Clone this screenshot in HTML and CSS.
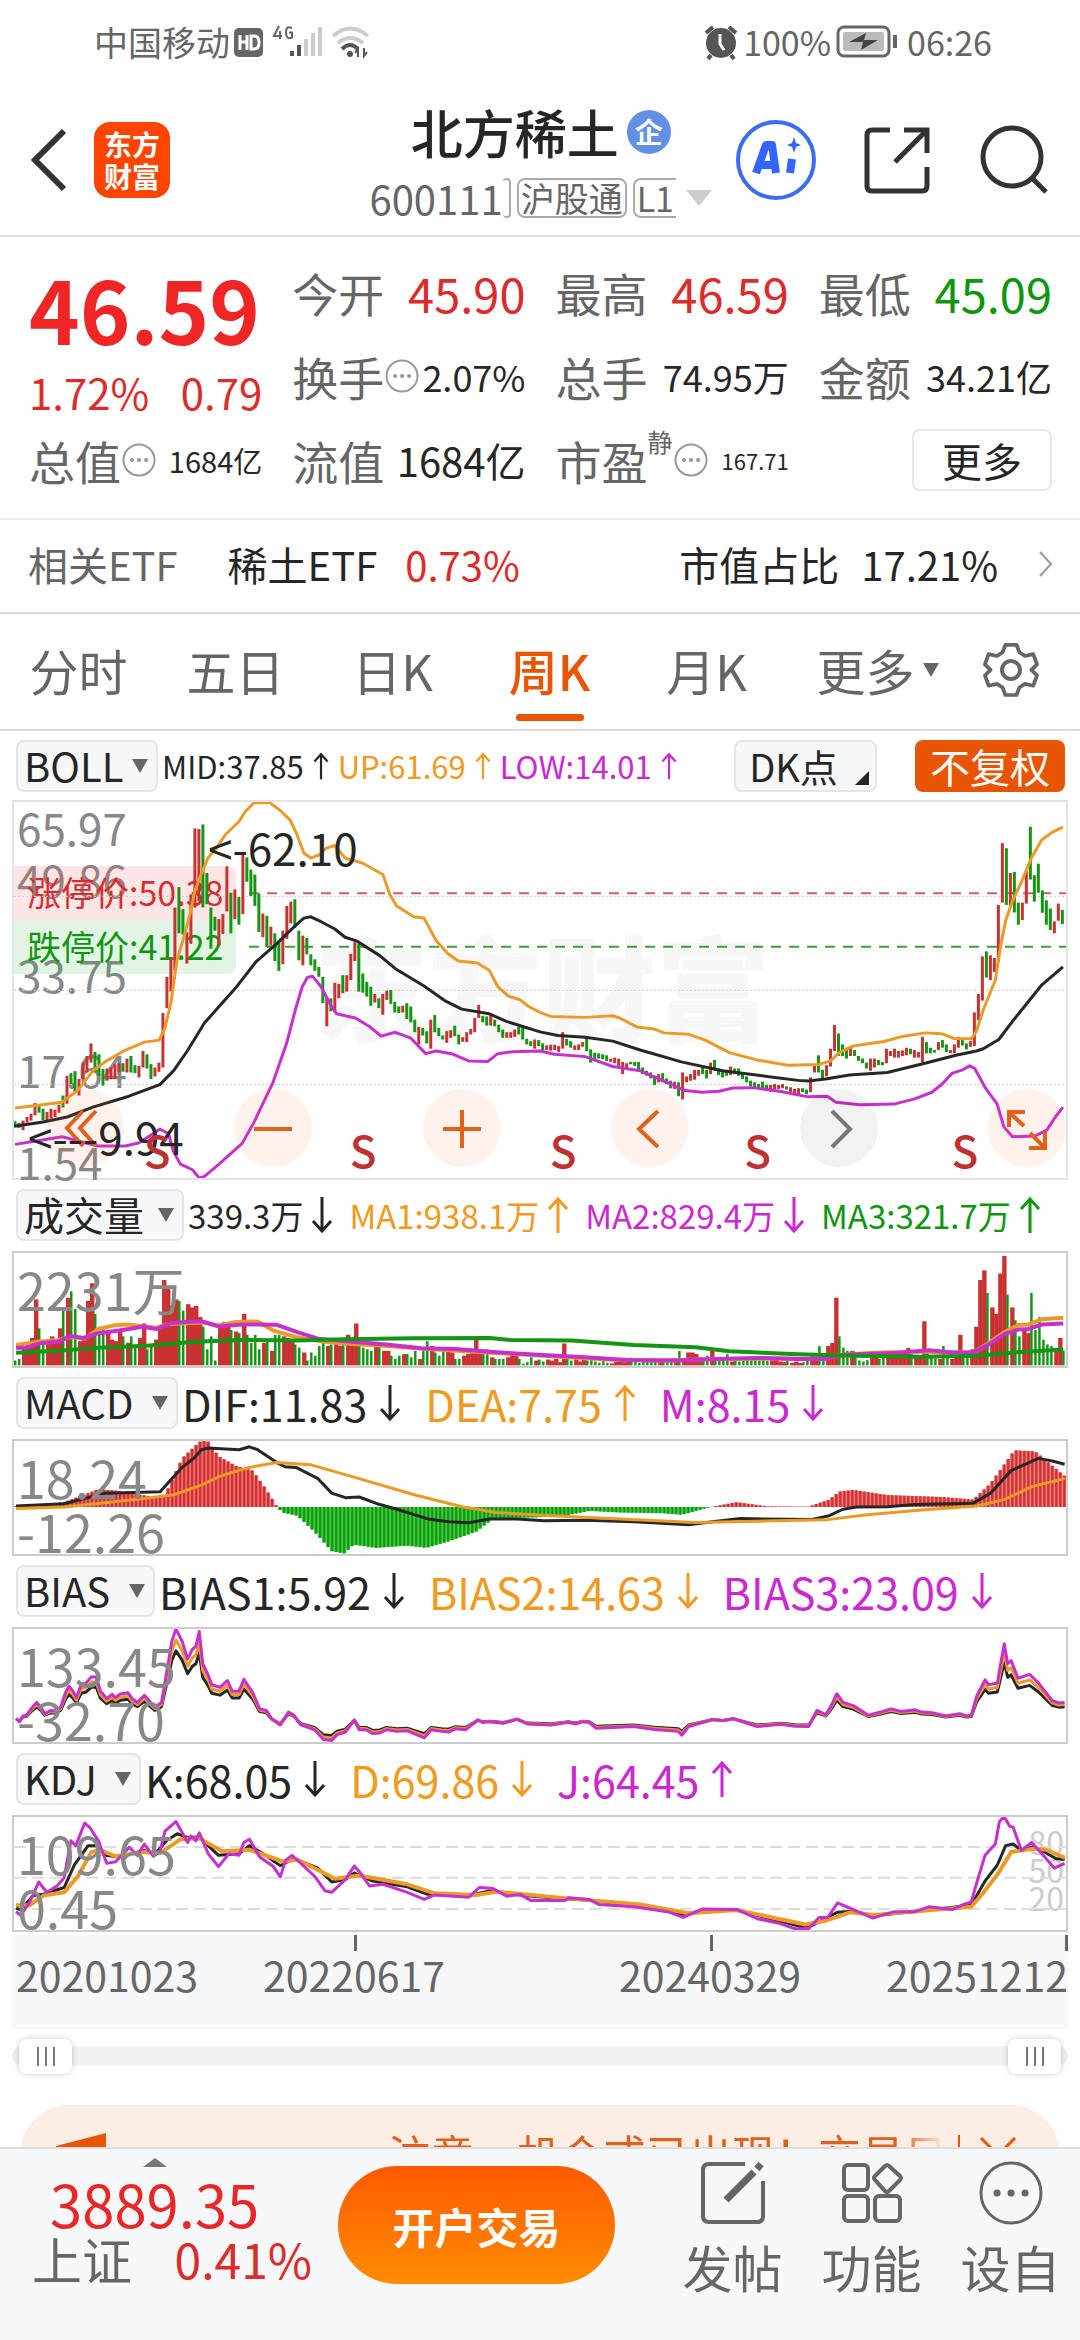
FILE: index.html
```html
<!DOCTYPE html>
<html lang="zh-CN">
<head>
  <meta charset="UTF-8">
  <meta name="viewport" content="width=device-width, initial-scale=1.0">
  <title>北方稀土 600111</title>
  <link rel="stylesheet" href="styles.css">
</head>
<body>
  <svg class="defs" aria-hidden="true">
    <symbol id="up" viewBox="0 0 22 38"><path d="M11 37V3M2 13l9-10 9 10"/></symbol>
    <symbol id="down" viewBox="0 0 22 38"><path d="M11 1v34M2 25l9 10 9-10"/></symbol>
    <symbol id="info" viewBox="0 0 34 34"><circle cx="17" cy="17" r="15.5"/><path d="M10 17h.1M17 17h.1M24 17h.1" stroke-width="4" stroke-linecap="round"/></symbol>
  </svg>

  <div class="status">
    <span>中国移动</span>
    <svg class="signal" width="142" height="40" viewBox="0 0 142 40">
      <rect x="2" y="6" width="29" height="29" rx="5" fill="#666"/>
      <path d="M8 13v15M15 13v15M8 20h7M19 14v13h3q5 0 5-6.500t-5-6.500z" fill="none" stroke="#fff" stroke-width="3"/>
      <path d="M47 4l-5 10h8M48 9v8M60 6q-6-3-6 4.500t6 5v-5h-3" fill="none" stroke="#666" stroke-width="2"/>
      <path d="M60 29v5M67 23v11" stroke="#555" stroke-width="4"/>
      <path d="M74 17v17M81 11v23M88 5v29" stroke="#ccc" stroke-width="4"/>
      <path d="M101 14q17-15 35 0M106 21q12-10 25 0" fill="none" stroke="#ccc" stroke-width="4"/>
      <path d="M110 27q8-8 16 0" fill="none" stroke="#555" stroke-width="4"/>
      <circle cx="118" cy="32" r="3" fill="#555"/>
      <path d="M126 35v-8l-3 4M132 26v8l3-4" fill="none" stroke="#555" stroke-width="2"/>
    </svg>
    <svg class="alarm" width="36" height="40" viewBox="0 0 36 40">
      <circle cx="18" cy="21" r="15" fill="#555"/>
      <path d="M3 11l7-6M26 5l7 6M8 33l-3 4M28 33l3 4" stroke="#555" stroke-width="4"/>
      <path d="M17 12v10l4 6" fill="none" stroke="#fff" stroke-width="3"/>
    </svg>
    <span>100%</span>
    <svg class="battery" width="64" height="40" viewBox="0 0 64 40">
      <rect x="3" y="5" width="51" height="29" rx="6" fill="none" stroke="#666" stroke-width="3"/>
      <rect x="8" y="10" width="41" height="19" rx="2" fill="#bbb"/>
      <path d="M14 20l17-9-2 7h14l-17 10 2-8z" fill="#444"/>
      <path d="M60 13v13" stroke="#666" stroke-width="4"/>
    </svg>
    <span>06:26</span>
  </div>

  <header class="header">
    <button class="plain" aria-label="返回"><svg width="38" height="64" viewBox="0 0 38 64"><path d="M34 3L5 32l29 29" fill="none" stroke="#333" stroke-width="6"/></svg></button>
    <a class="logo" href="#"><span>东方</span><span>财富</span></a>
    <div class="title">
      <h1>北方稀土<span class="badge">企</span></h1>
      <div class="code">
        <span>600111</span><span class="tag tag-left"></span><span class="tag">沪股通</span><span class="tag tag-cut">L1</span><i class="tri tri-light"></i>
      </div>
    </div>
    <button class="plain ai" aria-label="AI">
      <svg width="80" height="80" viewBox="0 0 80 80">
        <circle cx="40" cy="40" r="38" fill="#fff" stroke="#3d6cf2" stroke-width="4"/>
        <path d="M20 53L30 25h6l4 28M25 45h13M56 39l-2 14" fill="none" stroke="#3366ff" stroke-width="8" stroke-linejoin="round"/>
        <path d="M58 17l2 6 5 2-5 2-2 6-2-6-5-2 5-2z" fill="#3366ff"/>
      </svg>
    </button>
    <button class="plain" aria-label="分享">
      <svg width="66" height="68" viewBox="0 0 66 68" fill="none" stroke="#333" stroke-width="5">
        <path d="M26 4H8q-5 0-5 5v51q0 5 5 5h50q5 0 5-5V41M40 4h23v23M62 5L31 36"/>
      </svg>
    </button>
    <button class="plain" aria-label="搜索">
      <svg width="68" height="70" viewBox="0 0 68 70" fill="none" stroke="#333" stroke-width="5"><circle cx="32" cy="32" r="29"/><path d="M52 53l14 14"/></svg>
    </button>
  </header>

  <main class="content">
    <section class="quote">
      <div class="price">
        <strong>46.59</strong>
        <p><span>1.72%</span><span>0.79</span></p>
      </div>
      <dl class="item"><dt>今开</dt><dd class="large red">45.90</dd></dl>
      <dl class="item"><dt>最高</dt><dd class="large red">46.59</dd></dl>
      <dl class="item"><dt>最低</dt><dd class="large green">45.09</dd></dl>
      <dl class="item"><dt>换手<svg class="info"><use href="#info"/></svg></dt><dd>2.07%</dd></dl>
      <dl class="item"><dt>总手</dt><dd>74.95万</dd></dl>
      <dl class="item"><dt>金额</dt><dd>34.21亿</dd></dl>
      <dl class="item"><dt>总值<svg class="info"><use href="#info"/></svg></dt><dd class="small">1684亿</dd></dl>
      <dl class="item"><dt>流值</dt><dd class="medium">1684亿</dd></dl>
      <dl class="item"><dt>市盈<sup>静</sup><svg class="info"><use href="#info"/></svg></dt><dd class="tiny">167.71</dd></dl>
      <button class="more">更多</button>
    </section>

    <a class="etf" href="#">
      <span class="muted">相关ETF</span>
      <span class="etf-name">稀土ETF</span>
      <span class="red">0.73%</span>
      <span class="etf-share">市值占比</span>
      <span>17.21%</span>
      <svg width="16" height="28" viewBox="0 0 16 28"><path d="M2 2l11 12L2 26" fill="none" stroke="#999" stroke-width="2"/></svg>
    </a>

    <nav class="tabs">
      <button>分时</button>
      <button>五日</button>
      <button>日K</button>
      <button class="active">周K</button>
      <button>月K</button>
      <button class="tab-more">更多<i class="tri"></i></button>
      <button aria-label="设置">
        <svg width="58" height="60" viewBox="0 0 58 60" fill="none" stroke="#666" stroke-width="4" stroke-linejoin="round">
          <path d="M23 3h12l3 8 6 4 9-2 4 11-6 6 6 6-4 11-9-2-6 4-3 8H23l-3-8-6-4-9 2-4-11 6-6-6-6 4-11 9 2 6-4z" transform="translate(2 2) scale(.93)"/><circle cx="29" cy="30" r="9"/>
        </svg>
      </button>
    </nav>

    <section class="charts">
      <div class="legend legend-main">
        <label class="pick"><select aria-label="主图指标"><option>BOLL</option></select></label>
        <span>MID:37.85<svg class="arrow"><use href="#up"/></svg></span>
        <span class="orange">UP:61.69<svg class="arrow"><use href="#up"/></svg></span>
        <span class="purple">LOW:14.01<svg class="arrow"><use href="#up"/></svg></span>
        <button class="dk">DK点</button>
        <button class="adjust">不复权</button>
      </div>
      <div class="chart chart-main">
        <div class="watermark">东方财富</div>
        <div class="scale">
          <span>65.97</span><span>49.86</span><span>33.75</span><span>17.64</span><span>1.54</span>
        </div>
        <div class="limits"><p class="limit-up">涨停价:50.38</p><p class="limit-down">跌停价:41.22</p></div>
        <svg id="kline" class="plot" viewBox="35 30 3066 1140" preserveAspectRatio="none"></svg>
        <span class="note note-high">&lt;-62.10</span>
        <div class="tools">
          <button aria-label="最左"><svg viewBox="0 0 78 78"><path d="M37 22L21 39l16 18M50 22L34 39l16 18"/></svg></button>
          <button aria-label="缩小"><svg viewBox="0 0 78 78"><path d="M20 40h38"/></svg></button>
          <button aria-label="放大"><svg viewBox="0 0 78 78"><path d="M20 40h38M39 21v38"/></svg></button>
          <button aria-label="左移"><svg viewBox="0 0 78 78"><path d="M47 22L28 40l19 18"/></svg></button>
          <button class="off" aria-label="右移"><svg viewBox="0 0 78 78"><path d="M32 22l18 18-18 18"/></svg></button>
          <button aria-label="全屏"><svg viewBox="0 0 78 78"><path d="M21 38V23h16M22 24l14 13M41 59h16V43M56 58L42 44"/></svg></button>
        </div>
        <span class="note note-low">&lt;---9.94</span>
        <b class="sell" style="left:13.6%">S</b>
        <b class="sell" style="left:33.2%">S</b>
        <b class="sell" style="left:52.2%">S</b>
        <b class="sell" style="left:70.7%">S</b>
        <b class="sell" style="left:90.4%">S</b>
      </div>

      <div class="legend legend-volume">
        <label class="pick"><select aria-label="副图指标一"><option>成交量</option></select></label>
        <span>339.3万<svg class="arrow"><use href="#down"/></svg></span>
        <span class="orange">MA1:938.1万<svg class="arrow"><use href="#up"/></svg></span>
        <span class="purple">MA2:829.4万<svg class="arrow"><use href="#down"/></svg></span>
        <span class="green">MA3:321.7万<svg class="arrow"><use href="#up"/></svg></span>
      </div>
      <div class="chart">
        <svg id="volume" class="plot" viewBox="17 214 1533 351" preserveAspectRatio="none"></svg>
        <div class="range"><span>2231万</span></div>
      </div>

      <div class="legend">
        <label class="pick"><select aria-label="副图指标二"><option>MACD</option></select></label>
        <span>DIF:11.83<svg class="arrow"><use href="#down"/></svg></span>
        <span class="orange">DEA:7.75<svg class="arrow"><use href="#up"/></svg></span>
        <span class="purple">M:8.15<svg class="arrow"><use href="#down"/></svg></span>
      </div>
      <div class="chart">
        <svg id="macd" class="plot" viewBox="17 208 1533 351" preserveAspectRatio="none"></svg>
        <div class="range"><span>18.24</span><span>-12.26</span></div>
      </div>

      <div class="legend">
        <label class="pick"><select aria-label="副图指标三"><option>BIAS</option></select></label>
        <span>BIAS1:5.92<svg class="arrow"><use href="#down"/></svg></span>
        <span class="orange">BIAS2:14.63<svg class="arrow"><use href="#down"/></svg></span>
        <span class="purple">BIAS3:23.09<svg class="arrow"><use href="#down"/></svg></span>
      </div>
      <div class="chart">
        <svg id="bias" class="plot" viewBox="17 202 1533 351" preserveAspectRatio="none"></svg>
        <div class="range"><span>133.45</span><span>-32.70</span></div>
      </div>

      <div class="legend">
        <label class="pick"><select aria-label="副图指标四"><option>KDJ</option></select></label>
        <span>K:68.05<svg class="arrow"><use href="#down"/></svg></span>
        <span class="orange">D:69.86<svg class="arrow"><use href="#down"/></svg></span>
        <span class="purple">J:64.45<svg class="arrow"><use href="#up"/></svg></span>
      </div>
      <div class="chart">
        <div class="levels"><span>80</span><span>50</span><span>20</span></div>
        <svg id="kdj" class="plot" viewBox="17 196 1533 351" preserveAspectRatio="none"></svg>
        <div class="range"><span>109.65</span><span>0.45</span></div>
      </div>

      <div class="axis"><span>20201023</span><span>20220617</span><span>20240329</span><span>20251212</span></div>
      <div class="slider">
        <input type="range" aria-label="开始日期" min="0" max="100" value="0">
        <input type="range" aria-label="结束日期" min="0" max="100" value="100">
      </div>
    </section>

    <div class="notice">
      <svg width="56" height="50" viewBox="0 0 56 50" fill="#e85505"><path d="M4 16L54 3v44L4 34z"/></svg>
      <p>注意，机会或已出现！交易日内</p>
      <button class="plain" aria-label="关闭"><svg width="40" height="40" viewBox="0 0 40 40"><path d="M3 3l34 34M37 3L3 37" stroke="#e85505" stroke-width="3"/></svg></button>
    </div>
  </main>

  <footer class="bottom">
    <a class="index" href="#">
      <i class="tri-up"></i>
      <strong>3889.35</strong>
      <span class="index-row"><span>上证</span><span class="red">0.41%</span></span>
    </a>
    <button class="trade">开户交易</button>
    <button class="action">
      <svg width="64" height="64" viewBox="0 0 64 64" fill="none" stroke="#666" stroke-width="4"><path d="M44 3H8q-6 0-6 6v46q0 6 6 6h48q6 0 6-6V20"/><path d="M25 39L53 11" stroke-width="7"/><path d="M56 8l4-5" stroke-width="7"/></svg>
      <span>发帖</span>
    </button>
    <button class="action">
      <svg width="64" height="64" viewBox="0 0 64 64" fill="none" stroke="#666" stroke-width="4"><rect x="4" y="4" width="24" height="25" rx="4"/><rect x="4" y="35" width="24" height="25" rx="4"/><rect x="35" y="35" width="25" height="25" rx="4"/><path d="M45 5q2-2 4 0l11 10q2 2 0 4L49 30q-2 2-4 0L35 19q-2-2 0-4z"/></svg>
      <span>功能</span>
    </button>
    <button class="action">
      <svg width="64" height="64" viewBox="0 0 64 64" fill="none" stroke="#666" stroke-width="3"><circle cx="32" cy="32" r="30"/><path d="M18 32h.1M32 32h.1M46 32h.1" stroke-width="7" stroke-linecap="round"/></svg>
      <span>设自</span>
    </button>
  </footer>
  <script src="charts.js"></script>
</body>
</html>
```
FILE: styles.css
```css
* {
  box-sizing: border-box;
}
body {
  margin: 0;
  height: 100vh;
  display: flex;
  flex-direction: column;
  overflow: hidden;
  background: #fff;
  color: #262626;
  font-family: "Noto Sans CJK SC", sans-serif;
  font-size: 40px;
}
h1, p, dl, dd {
  margin: 0;
}
a {
  color: inherit;
  text-decoration: none;
}
button, select {
  font: inherit;
  color: inherit;
  border: none;
  background: none;
  padding: 0;
  cursor: pointer;
}
svg {
  display: block;
  flex: none;
}
.defs {
  position: absolute;
  width: 0;
  height: 0;
}
.red { color: #dc2b2b; }
.green { color: #0f960f; }
.orange { color: #f09a20; }
.purple { color: #cc28d2; }
.muted { color: #666; }

/* Status bar */
.status {
  flex: none;
  height: 85px;
  padding: 0 88px 2px 94px;
  display: flex;
  align-items: center;
  font-size: 34px;
  color: #666;
}
.signal {
  margin-left: 2px;
}
.alarm {
  margin-left: auto;
  margin-right: 4px;
}
.battery {
  margin: 0 8px 0 4px;
}

/* Header */
.header {
  flex: none;
  height: 152px;
  padding: 0 32px 0 30px;
  display: flex;
  align-items: center;
  border-bottom: 2px solid #ddd;
}
.logo {
  width: 76px;
  height: 76px;
  margin-left: 26px;
  border-radius: 16px;
  background: #ff4400;
  color: #fff;
  display: flex;
  flex-direction: column;
  align-items: center;
  justify-content: center;
  font-size: 28px;
  font-weight: 700;
  line-height: 32px;
}
.title {
  margin-left: auto;
  margin-right: 24px;
  padding-top: 4px;
}
.title h1 {
  display: flex;
  align-items: center;
  justify-content: center;
  font-size: 52px;
  font-weight: 500;
  line-height: 72px;
}
.badge {
  width: 44px;
  height: 44px;
  margin-left: 8px;
  border-radius: 50%;
  background: #6290e6;
  color: #fff;
  font-size: 28px;
  font-weight: 700;
  line-height: 42px;
  text-align: center;
}
.code {
  display: flex;
  align-items: center;
  height: 60px;
  color: #666;
  font-size: 40px;
}
.tag {
  height: 40px;
  margin-left: 6px;
  padding: 0 2px;
  border: 2px solid #aaa;
  border-radius: 8px;
  font-size: 34px;
  line-height: 36px;
}
.tag-left {
  width: 8px;
  margin-left: 0;
  border-left: none;
}
.tag-cut {
  border-right: none;
  border-radius: 8px 0 0 8px;
}
.tri {
  display: inline-block;
  border: 8px solid transparent;
  border-top: 14px solid #666;
  border-bottom: none;
}
.tri-light {
  margin-left: 10px;
  border-width: 16px 13px 0;
  border-top-color: #ccc;
}
.header .ai {
  margin-right: 48px;
}
.header .ai + .plain {
  margin-right: 50px;
}

.content {
  flex: 1;
  min-height: 0;
  overflow: hidden;
}
.quote {
  padding: 13px 28px 16px 29px;
  display: grid;
  grid-template-columns: repeat(4, minmax(0, 1fr));
  grid-auto-rows: 84px;
  column-gap: 30px;
  border-bottom: 2px solid #eee;
}
.price {
  grid-row: span 2;
  color: #f02525;
}
.price strong {
  display: block;
  font-size: 86px;
  line-height: 116px;
}
.price p {
  display: flex;
  justify-content: space-between;
  color: #dc2b2b;
  font-size: 42px;
  line-height: 52px;
}
.item {
  display: flex;
  align-items: center;
  justify-content: space-between;
  white-space: nowrap;
}
.item dt {
  display: flex;
  align-items: center;
  font-size: 46px;
  color: #666;
}
.item dd {
  font-size: 36px;
}
.item .large { font-size: 47px; }
.item .medium { font-size: 40px; }
.item .small { font-size: 29px; }
.item .tiny { font-size: 22px; }
.item sup {
  align-self: flex-start;
  font-size: 25px;
  line-height: 28px;
}
.info {
  width: 34px;
  height: 34px;
  margin-left: 1px;
  fill: none;
  stroke: #999;
  stroke-width: 2;
}
.quote .more {
  width: 140px;
  height: 62px;
  place-self: center end;
  border: 2px solid #e8e8e8;
  border-radius: 8px;
  line-height: 54px;
}
.etf {
  height: 94px;
  padding: 0 26px 4px 28px;
  display: flex;
  align-items: center;
  border-bottom: 2px solid #ddd;
}
.etf-name {
  margin: 0 28px 0 50px;
}
.etf-share {
  margin: 0 22px 0 auto;
}
.etf svg {
  margin-left: 40px;
}

/* Period tabs */
.tabs {
  height: 117px;
  display: grid;
  grid-template-columns: repeat(6, 1fr) 138px;
  border-bottom: 2px solid #ddd;
  color: #666;
  font-size: 49px;
}
.tabs button {
  padding-bottom: 4px;
  display: flex;
  align-items: center;
  justify-content: center;
  white-space: nowrap;
}
.tabs .tri {
  margin-left: 8px;
}
.tabs .tab-more {
  padding-left: 28px;
}
.tabs .active {
  position: relative;
  color: #e85505;
  font-weight: 500;
}
.active::after {
  content: "";
  position: absolute;
  left: 50%;
  bottom: 8px;
  width: 68px;
  height: 7px;
  margin-left: -34px;
  border-radius: 4px;
  background: #e85505;
}

/* Charts */
.charts {
  padding: 0 12px;
}
.legend {
  height: 71px;
  padding: 0 0 2px 4px;
  display: flex;
  align-items: center;
  gap: 4px;
  font-size: 43px;
  white-space: nowrap;
}
.legend > span {
  display: flex;
  align-items: center;
  margin-right: 20px;
}
.legend-main {
  height: 69px;
  padding-bottom: 0;
  font-size: 31px;
}
.legend-main > span {
  margin-right: 4px;
}
.legend-volume {
  font-size: 33px;
}
.legend-volume > span {
  margin-right: 12px;
}
.arrow {
  width: 22px;
  height: 38px;
  margin-left: 12px;
  fill: none;
  stroke: currentColor;
  stroke-width: 3;
}
.legend-main .arrow {
  width: 18px;
  height: 28px;
  margin-left: 8px;
}
.legend-volume .arrow {
  margin-left: 8px;
}
.pick {
  position: relative;
}
.pick select {
  display: block;
  appearance: none;
  height: 52px;
  padding: 0 42px 2px 6px;
  border: 2px solid #e3e5e9;
  border-radius: 8px;
  background: #f7f8fa;
  font-size: 40px;
  line-height: 46px;
}
.pick::after {
  content: "";
  position: absolute;
  right: 10px;
  top: 19px;
  border: 8px solid transparent;
  border-top: 14px solid #666;
  border-bottom: none;
}
.legend-main select {
  padding-right: 32px;
}
.legend-volume select {
  padding-right: 38px;
}
.legend .dk, .legend .adjust {
  height: 52px;
  border-radius: 8px;
  font-size: 38px;
  line-height: 44px;
}
.legend .dk {
  position: relative;
  width: 143px;
  margin-left: auto;
  padding-right: 24px;
  border: 2px solid #e3e5e9;
  background: #f7f8fa;
}
.dk::after {
  content: "";
  position: absolute;
  right: 6px;
  bottom: 5px;
  border-left: 14px solid transparent;
  border-bottom: 14px solid #262626;
}
.legend .adjust {
  width: 150px;
  margin: 0 3px 0 34px;
  background: #e85505;
  color: #fff;
  font-size: 40px;
}
.chart {
  position: relative;
  height: 117px;
  border: 2px solid #ccc;
}
.chart-main {
  height: 380px;
  border-color: #e3e3e3;
}
.plot {
  position: absolute;
  inset: 0;
  width: 100%;
  height: 100%;
}
.plot * {
  vector-effect: non-scaling-stroke;
}
.watermark {
  position: absolute;
  top: 92px;
  left: 300px;
  color: #f7f7f7;
  font-size: 114px;
  font-weight: 900;
  line-height: 180px;
}
.scale span {
  position: absolute;
  left: 3px;
  color: #888;
  font-size: 44px;
  line-height: 56px;
}
.scale span:nth-child(1) { top: -3px; }
.scale span:nth-child(2) { top: 49px; }
.scale span:nth-child(3) { top: 144px; }
.scale span:nth-child(4) { top: 239px; }
.scale span:nth-child(5) { bottom: -11px; }
.limits {
  position: absolute;
  top: 64px;
  left: 0;
  font-size: 34px;
}
.limits p {
  height: 54px;
  padding: 0 13px;
  line-height: 52px;
}
.limit-up {
  border-radius: 0 8px 0 0;
  background: rgba(255, 80, 80, .14);
  color: #dc2b2b;
}
.limit-down {
  border-radius: 0 0 8px 0;
  background: rgba(30, 180, 50, .13);
  color: #0f960f;
}
.note {
  position: absolute;
  font-size: 44px;
  line-height: 56px;
}
.note-high {
  top: 17px;
  left: 194px;
}
.note-low {
  top: 306px;
  left: 14px;
}
.tools {
  position: absolute;
  left: 32px;
  right: 0;
  bottom: 11px;
  display: flex;
  justify-content: space-between;
}
.tools button {
  width: 78px;
  height: 78px;
  border-radius: 50%;
  background: rgba(255, 100, 30, .09);
}
.tools svg {
  fill: none;
  stroke: #e0601c;
  stroke-width: 4;
}
.tools .off {
  background: rgba(0, 0, 0, .05);
}
.tools .off svg {
  stroke: #777;
}
.sell {
  position: absolute;
  top: 319px;
  width: 28px;
  margin-left: -14px;
  color: #c03030;
  font-size: 44px;
  font-weight: 500;
  line-height: 56px;
  text-align: center;
}
.range {
  position: absolute;
  top: 9px;
  left: 3px;
  color: #888;
  font-size: 52px;
  line-height: 54px;
}
.range span, .levels span {
  display: block;
}
.levels {
  position: absolute;
  top: 10px;
  right: 2px;
  color: #ccc;
  font-size: 32px;
  line-height: 28px;
}
.axis {
  height: 94px;
  margin-top: 3px;
  display: grid;
  grid-template-columns: minmax(0, 164fr) minmax(0, 356fr) minmax(0, 356fr) minmax(0, 180fr);
  background: #f7f8fa;
  color: #666;
  font-size: 41px;
  line-height: 78px;
}
.axis span {
  position: relative;
  text-align: center;
}
.axis span:first-child {
  padding-left: 4px;
  text-align: left;
}
.axis span:last-child {
  display: flex;
  justify-content: flex-end;
}
.axis span:not(:first-child)::before {
  content: "";
  position: absolute;
  top: 0;
  left: 50%;
  width: 3px;
  height: 16px;
  background: #666;
}
.axis span:last-child::before {
  left: auto;
  right: 0;
}
.slider {
  position: relative;
  height: 20px;
  margin: 17px 0 39px;
  border-radius: 10px;
  background: #f1f1f4;
}
.slider input {
  position: absolute;
  left: 7px;
  right: 7px;
  top: -8px;
  width: calc(100% - 14px);
  height: 36px;
  margin: 0;
  appearance: none;
  background: none;
  pointer-events: none;
}
.slider input::-webkit-slider-thumb {
  appearance: none;
  width: 53px;
  height: 35px;
  border-radius: 8px;
  background: linear-gradient(90deg, #777 2px, transparent 2px 8px, #777 8px 10px, transparent 10px 16px, #777 16px) center / 18px 19px no-repeat #fff;
  box-shadow: 0 0 6px rgba(0, 0, 0, .2);
  pointer-events: auto;
}

/* Notice */
.notice {
  height: 100px;
  margin: 0 20px;
  padding: 0 42px 0 32px;
  display: flex;
  align-items: center;
  border-radius: 50px;
  background: #fdeee5;
  color: #e0601c;
  font-size: 43px;
}
.notice p {
  width: 556px;
  margin-left: auto;
  margin-right: 14px;
  padding-bottom: 4px;
  overflow: hidden;
  white-space: nowrap;
  -webkit-mask-image: linear-gradient(90deg, #000 92%, transparent);
  mask-image: linear-gradient(90deg, #000 92%, transparent);
}
.notice .plain {
  padding-left: 18px;
  border-left: 2px solid #e85505;
}

/* Bottom bar */
.bottom {
  flex: none;
  height: 193px;
  padding-left: 32px;
  display: flex;
  align-items: flex-start;
  border-top: 2px solid #ddd;
  background: #f7f8fa;
  color: #666;
  font-size: 50px;
}
.index {
  width: 280px;
  padding-top: 9px;
  display: flex;
  flex-direction: column;
}
.index strong {
  padding-left: 18px;
  color: #e82828;
  font-size: 58px;
  font-weight: 400;
  line-height: 72px;
}
.tri-up {
  align-self: flex-start;
  margin-left: 111px;
  border: 12px solid transparent;
  border-top: none;
  border-bottom: 9px solid #777;
}
.index-row {
  display: flex;
  justify-content: space-between;
  line-height: 38px;
}
.index-row .red {
  font-size: 48px;
}
.trade {
  width: 277px;
  height: 118px;
  margin: 17px auto 0 26px;
  border-radius: 59px;
  background: linear-gradient(#ff5a00, #ff8c00);
  color: #fff;
  font-size: 42px;
  font-weight: 700;
}
.action {
  width: 139px;
  padding-top: 12px;
  display: flex;
  flex-direction: column;
  align-items: center;
}
.action span {
  line-height: 82px;
}
```
FILE: charts.js
```js
const RED = '#c83232';
const GREEN = '#149614';
const BLACK = '#262626';
const ORANGE = '#eb9a28';
const PURPLE = '#c830cd';

// Weekly candles: colour, high and low
const candles = `g998-1012 g1003-1018 r996-1025 r985-1002 r975-996 r943-980 g948-972 g960-995 r970-995 r960-990
r963-985 r948-972 g920-956 r860-945 g852-885 g846-912 r870-920 r820-870 r800-850 r762-820
g788-850 g795-860 g840-890 r838-875 r835-870 r825-870 r822-850 g822-848 r808-850 g800-850
g828-852 r830-865 r785-835 g795-838 g825-870 r835-862 r820-848 r670-835 r560-655 r500-605
r350-540 g288-428 g355-432 r425-520 r310-460 r110-350 r112-330 g98-350 g245-340 g350-475
g378-420 r385-465 r370-430 r225-362 g305-428 r295-385 g318-402 r190-370 g198-272 g235-315
g250-345 g308-424 r368-440 g375-470 r408-465 g428-512 g450-542 r420-522 r345-445 r332-398
g325-412 g420-510 r435-525 g442-492 g492-525 g507-542 g530-560 g560-640 r625-710 g625-665
r578-668 r582-625 g555-610 r555-605 r490-570 r455-512 g460-605 g550-608 g575-620 g590-648
r612-638 g625-655 r612-675 r602-630 g600-642 g636-668 g650-670 r648-668 g640-688 g650-698
g690-728 r712-765 g715-738 g725-762 r690-778 g676-728 g715-740 g738-750 r725-760 r722-745
g708-740 g735-765 r743-757 r728-758 r718-735 r685-728 r645-685 g678-698 g680-708 r672-708
g690-710 g705-728 g720-745 r728-745 r728-745 r720-742 g712-735 g712-750 g748-765 g755-770
r750-778 g752-770 g762-782 r768-782 r766-784 r766-782 r770-788 r728-778 g748-768 g755-775
r768-782 r765-782 r758-772 g745-785 g780-820 g790-812 g792-808 g795-810 g798-815 r808-818
r805-822 r808-830 r818-855 r822-838 g818-825 g818-830 g818-842 g835-855 g845-860 g850-868
g860-888 r855-880 g852-880 g868-885 g875-898 r878-900 g880-922 r850-932 r862-880 r855-875
r842-872 r842-860 g832-855 g842-868 r820-855 g812-845 g838-858 g845-865 g845-860 r832-858
g838-855 g838-860 g850-870 g862-880 g875-892 g880-898 g885-900 g878-900 g888-905 r888-908
r885-902 r888-900 r885-898 g892-902 r895-910 r900-915 r898-918 g898-910 g902-916 r865-910
r825-850 g798-850 g842-868 r828-862 r778-832 r706-785 g732-800 g765-800 g775-808 r772-800
g782-800 g800-815 g808-822 g820-838 r808-845 r808-835 g812-828 g818-828 r778-822 r785-800
r778-805 r785-805 r783-800 r775-798 g778-795 r782-805 r788-805 r742-820 g758-792 g775-792
g782-790 r758-782 g752-775 g765-788 r782-792 r765-792 r742-775 g745-768 g762-780 r755-772
r668-770 r612-692 r498-632 g483-562 r495-570 r503-545 r342-515 r155-335 g170-342 r245-345
g242-365 g335-402 r335-388 r240-338 g105-265 g252-332 g217-305 g298-366 g328-402 g353-418
r392-428 r338-390 g357-400`.split(/\s+/).map(c => {
  const [high, low] = c.slice(1).split('-').map(Number);
  return { color: c[0] === 'r' ? RED : GREEN, high, low };
});

const volumes = [15, 20, 60, 70, 85, 205, 115, 75, 80, 90, 80, 115, 170, 210, 230, 175, 75, 80, 200, 255,
  160, 120, 120, 100, 80, 75, 110, 90, 70, 90, 60, 85, 130, 50, 60, 80, 120, 265, 245, 185,
  205, 200, 170, 190, 180, 185, 150, 120, 50, 90, 15, 130, 135, 125, 110, 105, 100, 160, 95, 70,
  95, 50, 70, 80, 45, 95, 95, 90, 85, 80, 65, 55, 40, 15, 40, 30, 60, 85, 60, 65,
  80, 60, 65, 95, 60, 130, 70, 55, 50, 45, 60, 65, 45, 45, 30, 20, 30, 35, 35, 25,
  45, 20, 45, 75, 60, 40, 30, 50, 45, 40, 20, 20, 30, 35, 45, 80, 40, 45, 50, 25,
  20, 20, 20, 25, 40, 30, 20, 5, 10, 25, 15, 18, 12, 18, 14, 20, 10, 68, 20, 15,
  25, 12, 18, 15, 20, 12, 8, 15, 8, 6, 12, 18, 10, 20, 24, 12, 8, 12, 20, 10,
  14, 10, 18, 10, 16, 12, 45, 20, 40, 40, 35, 25, 20, 30, 50, 20, 20, 25, 35, 12,
  18, 12, 14, 20, 18, 22, 16, 24, 14, 20, 22, 12, 10, 16, 8, 12, 8, 10, 14, 28,
  22, 60, 30, 60, 70, 210, 90, 55, 45, 45, 25, 15, 12, 16, 40, 35, 20, 30, 36, 42,
  38, 45, 48, 54, 35, 30, 28, 137, 40, 25, 22, 20, 60, 25, 20, 30, 95, 40, 25, 50,
  120, 265, 295, 225, 180, 160, 285, 340, 220, 180, 140, 90, 110, 100, 225, 110, 150, 80, 65, 60,
  50, 85, 45];

const macdBars = '20,410 60,405 90,398 140,358 165,362 200,375 235,385 262,262 285,215 290,207 300,210 315,255 340,285 365,300 385,360 400,411 408,430 430,440 455,490 480,550 498,557 512,530 545,540 590,533 618,540 650,520 690,490 715,450 740,447 780,445 820,440 855,425 900,430 960,432 990,437 1030,414 1070,398 1115,411 1175,412 1205,390 1220,365 1240,360 1290,376 1370,382 1415,390 1440,340 1475,237 1505,240 1530,285 1550,320';

const bias = '20,480 25,490 30,472 35,470 42,450 50,430 56,445 62,465 70,455 78,457 85,445 92,400 97,380 103,395 108,415 115,375 122,370 130,350 137,352 143,395 152,418 160,405 165,415 172,404 183,400 190,420 197,430 207,408 222,445 232,430 240,330 247,240 253,202 262,240 270,295 277,265 282,255 287,210 292,310 300,345 305,375 317,383 328,362 335,395 345,395 352,358 365,400 375,450 385,455 392,480 405,500 417,460 425,470 435,500 455,515 468,545 480,548 488,530 500,522 513,485 520,515 530,515 540,527 550,525 560,515 575,520 590,518 600,527 615,540 625,515 640,520 650,522 660,512 675,515 693,485 700,492 710,490 730,495 750,482 765,497 800,500 825,492 835,497 845,490 855,492 865,510 890,508 920,505 950,514 985,520 990,532 1000,505 1035,483 1050,487 1065,480 1100,505 1135,498 1155,504 1175,505 1187,455 1200,468 1208,440 1216,403 1225,430 1240,440 1262,470 1280,460 1295,450 1310,458 1330,453 1340,460 1355,462 1375,472 1395,465 1405,472 1412,470 1420,410 1432,360 1437,375 1450,370 1460,248 1465,310 1470,300 1480,355 1497,343 1510,370 1530,425 1540,432 1548,430';

function add(id, tag, attrs) {
  const el = document.createElementNS('http://www.w3.org/2000/svg', tag);
  for (const key in attrs) el.setAttribute(key, attrs[key]);
  document.getElementById(id).appendChild(el);
}

function line(id, points, color, width) {
  add(id, 'polyline', { points, fill: 'none', stroke: color, 'stroke-width': width, 'stroke-linejoin': 'round' });
}

function rule(id, x1, x2, y, color, dash, width = 1) {
  add(id, 'path', { d: `M${x1} ${y}H${x2}`, stroke: color, 'stroke-width': width, 'stroke-dasharray': dash });
}

function toPoints(text) {
  return text.split(' ').map(p => p.split(',').map(Number));
}

function valueAt(points, x) {
  const i = Math.max(1, points.findIndex(p => p[0] >= x));
  const [x1, y1] = points[i - 1];
  const [x2, y2] = points[i];
  return y1 + (y2 - y1) * (x - x1) / (x2 - x1);
}

// K line with Bollinger bands
[316, 601, 886].forEach(y => rule('kline', 35, 3101, y, '#ccc', '2 2'));
rule('kline', 720, 3101, 307, '#c86464', '10 8', 2);
rule('kline', 720, 3101, 469, '#3c9b3c', '10 8', 2);
candles.forEach((c, i) => {
  add('kline', 'path', { d: `M${38 + i * 11.65} ${c.high}V${c.low}`, stroke: c.color, 'stroke-width': 3 });
});
line('kline', '38,958 100,950 175,940 220,905 265,845 300,818 360,782 415,758 458,752 475,715 492,640 510,510 530,440 548,370 562,300 580,250 600,200 625,170 650,130 690,90 710,58 735,32 780,32 810,55 840,85 860,130 880,185 900,200 925,190 945,170 970,162 1000,200 1050,215 1110,250 1130,310 1150,345 1200,378 1230,382 1265,450 1300,490 1330,512 1385,518 1420,540 1445,590 1475,618 1510,630 1535,650 1568,668 1600,680 1700,683 1780,678 1800,685 1850,712 1900,718 1930,730 2000,734 2050,752 2120,790 2200,812 2290,828 2380,826 2415,815 2440,790 2480,770 2570,756 2620,742 2690,730 2740,733 2775,747 2825,748 2840,725 2860,660 2895,570 2910,470 2925,390 2945,330 2970,275 3000,200 3030,145 3060,122 3092,106', ORANGE, 3);
line('kline', '35,1013 120,1000 190,985 265,955 370,922 460,887 500,845 540,785 590,700 680,595 740,515 800,460 860,400 880,382 900,378 930,393 970,415 1000,440 1035,452 1100,495 1150,538 1230,588 1290,632 1340,658 1420,672 1470,695 1568,727 1620,738 1700,743 1780,755 1860,782 1980,818 2100,845 2230,862 2320,874 2350,876 2400,870 2470,858 2580,850 2690,822 2780,798 2840,785 2860,778 2905,750 2945,695 2980,650 3030,585 3092,530', BLACK, 3);
line('kline', '38,1068 100,1058 175,1045 260,1068 280,1073 360,1073 400,1063 460,1022 485,1035 500,1090 520,1128 555,1145 575,1170 590,1165 630,1130 700,1065 735,1000 790,880 830,760 855,660 875,590 890,562 905,558 930,590 955,640 975,672 1030,685 1070,710 1105,740 1145,728 1190,745 1235,793 1265,785 1310,793 1360,815 1415,817 1445,793 1490,787 1568,785 1610,795 1700,802 1780,832 1860,845 1920,872 1990,905 2040,910 2090,907 2130,897 2190,896 2270,908 2350,924 2405,922 2430,940 2500,948 2600,946 2660,930 2710,910 2740,885 2770,852 2800,842 2820,830 2835,838 2865,895 2900,945 2920,1015 2945,1045 3010,1043 3045,1025 3070,985 3092,955', PURPLE, 3);

// Volume
volumes.forEach((v, i) => {
  const up = candles[i].color === RED;
  add('volume', 'rect', { x: 17 + i * 5.83, y: 563 - v, width: up ? 6.4 : 3.6, height: v, fill: candles[i].color });
});
line('volume', '20,500 50,490 80,485 100,475 120,480 140,450 165,438 185,436 205,442 225,446 240,435 265,432 295,430 315,440 340,428 372,427 395,455 430,476 470,490 510,497 560,503 620,512 680,520 740,527 800,535 880,545 960,548 1040,543 1120,542 1180,543 1225,530 1270,524 1340,520 1370,523 1415,523 1440,490 1460,460 1480,438 1495,436 1515,420 1546,415', ORANGE, 4);
line('volume', '20,508 35,508 55,494 80,490 100,472 118,478 140,463 170,455 205,443 225,450 245,432 265,428 290,426 315,442 350,436 400,437 430,460 460,480 510,490 560,498 610,510 660,512 720,522 780,530 850,538 910,546 980,548 1040,543 1100,540 1160,543 1200,543 1225,530 1300,525 1350,516 1385,523 1415,523 1440,495 1460,466 1480,452 1495,450 1515,436 1546,433', PURPLE, 4);
line('volume', '20,524 80,518 140,508 210,502 280,490 350,484 430,486 500,482 600,479 710,478 740,484 830,486 920,500 1010,507 1060,519 1150,528 1220,532 1340,536 1420,533 1480,522 1546,514', GREEN, 4);

// MACD
const bars = toPoints(macdBars);
for (let i = 0; i < candles.length; i++) {
  const x = 20 + i * 5.83;
  const y = valueAt(bars, x);
  const up = y < 413;
  add('macd', 'rect', { x: x - 3, y: Math.min(y, 413), width: 6, height: Math.abs(413 - y), fill: up ? '#f06464' : '#37c837' });
  add('macd', 'path', { d: `M${x} 413V${y}`, stroke: up ? RED : GREEN, 'stroke-width': 2 });
}
line('macd', '20,410 90,403 150,370 230,366 245,330 262,290 280,260 290,235 300,230 345,235 360,226 372,235 400,275 412,288 428,290 460,325 480,370 500,384 520,382 545,402 575,420 620,450 650,459 680,462 710,450 750,450 790,456 850,454 920,459 1000,468 1035,459 1075,449 1180,452 1205,440 1225,420 1245,413 1290,412 1330,405 1415,401 1440,370 1470,300 1510,262 1530,270 1548,280', BLACK, 3);
line('macd', '20,418 90,413 150,400 200,388 250,375 290,345 320,315 360,290 400,275 450,282 520,325 600,375 670,412 720,430 800,440 900,450 1010,461 1100,457 1200,453 1260,437 1340,422 1420,410 1460,390 1500,350 1548,325', ORANGE, 3);

// BIAS: the shorter periods swing less
[[.76, BLACK], [.88, ORANGE], [1, PURPLE]].forEach(([k, color]) => {
  line('bias', toPoints(bias).map(([x, y]) => `${x},${485 + (y - 485) * k}`).join(' '), color, 3);
});

// KDJ
[289, 385, 482].forEach(y => rule('kdj', 17, 1550, y, '#ddd', '12 6', 2));
line('kdj', '20,478 27,485 45,440 60,436 90,415 105,345 125,285 138,285 150,315 170,320 207,300 222,312 240,268 255,248 270,260 287,258 300,285 315,315 345,310 360,285 380,310 405,347 425,325 460,355 480,398 500,390 513,370 540,395 590,413 620,436 680,440 710,426 760,440 820,450 860,455 930,475 992,498 1020,487 1070,486 1110,507 1165,537 1180,533 1217,492 1240,489 1270,503 1350,485 1412,470 1432,395 1450,345 1462,285 1473,280 1485,300 1500,290 1515,300 1535,325 1548,328', BLACK, 3);
line('kdj', '20,470 40,470 60,440 90,430 110,380 130,305 142,298 165,318 207,305 230,308 260,265 287,262 320,302 360,298 410,335 430,328 485,388 520,378 590,405 630,433 690,438 720,428 820,448 930,468 1000,495 1070,485 1170,530 1200,518 1235,492 1270,500 1412,475 1430,430 1450,375 1470,305 1500,295 1520,297 1548,322', ORANGE, 4);
line('kdj', '20,490 27,502 40,460 53,398 65,430 80,410 90,385 100,270 107,285 120,215 128,230 140,270 152,340 165,335 185,290 197,315 207,280 220,318 230,300 237,240 253,210 270,275 275,255 282,270 287,245 300,310 315,350 330,310 345,315 352,275 360,265 375,320 395,350 405,382 413,330 422,315 435,340 455,380 470,425 480,430 500,390 513,348 520,365 535,410 555,405 590,430 615,452 630,438 680,445 695,415 715,418 735,442 755,437 770,455 820,455 825,447 855,452 870,468 920,475 970,490 992,508 1020,482 1070,483 1100,512 1130,525 1155,543 1175,543 1190,508 1203,508 1217,463 1245,488 1268,510 1300,490 1330,490 1350,475 1385,483 1400,468 1412,460 1420,400 1432,315 1447,280 1453,210 1460,195 1468,225 1473,228 1485,300 1500,275 1515,310 1533,355 1548,340', PURPLE, 3);
```
